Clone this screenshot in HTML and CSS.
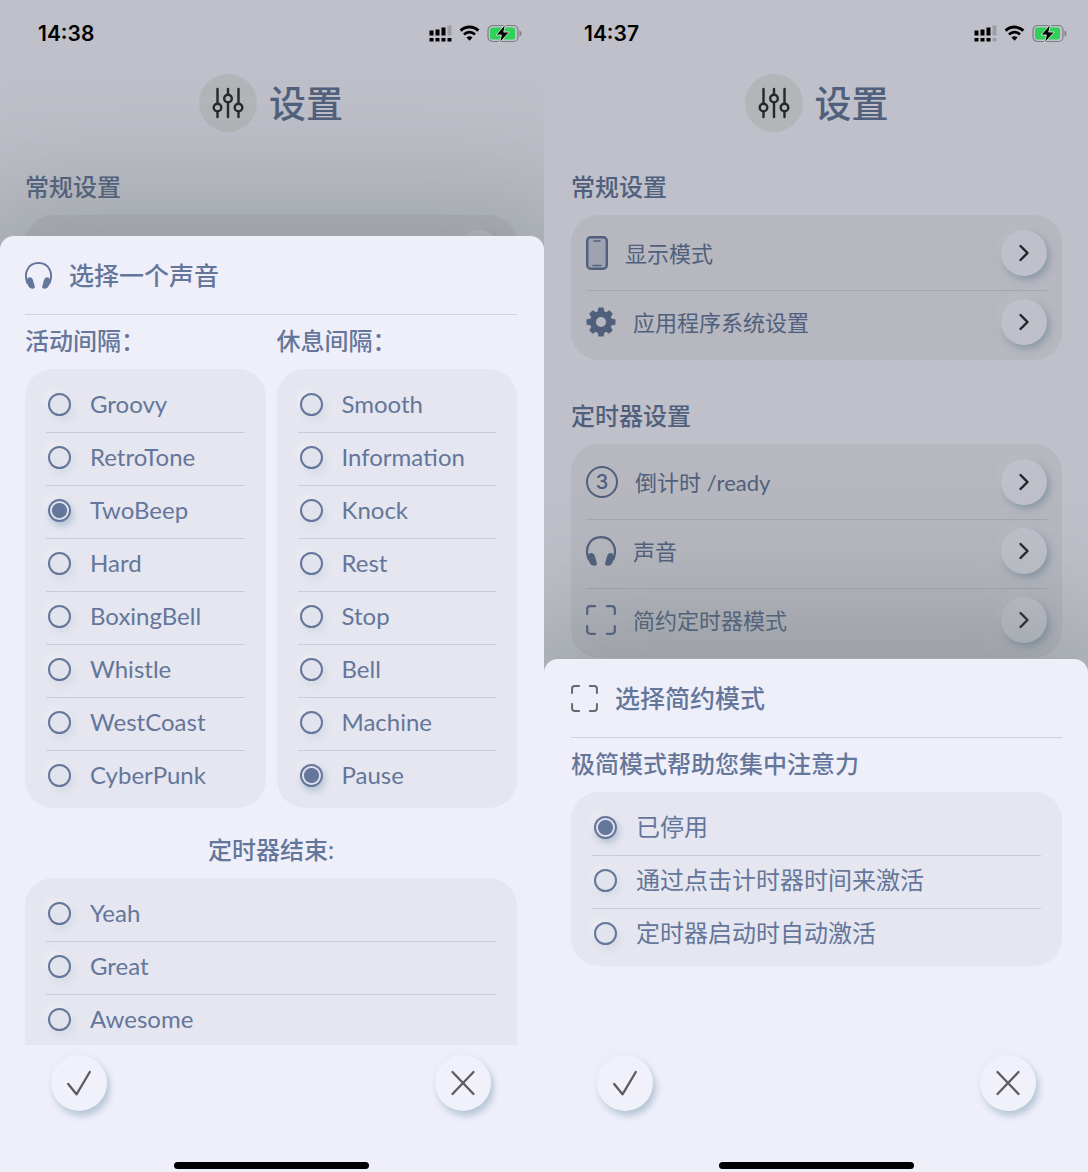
FILE: index.html
```html
<!DOCTYPE html>
<html lang="zh-CN">
<head>
<meta charset="utf-8">
<meta name="viewport" content="width=device-width, initial-scale=1">
<title>设置</title>
<link rel="stylesheet" href="styles.css">
</head>
<body>
<svg class="defs" aria-hidden="true">
  <symbol id="i-wifi" viewBox="0 0 21 17">
    <path d="M1.6 6.2a12.8 12.8 0 0 1 17.8 0" fill="none" stroke="#000" stroke-width="3"/>
    <path d="M5 9.9a8 8 0 0 1 11 0" fill="none" stroke="#000" stroke-width="2.8"/>
    <path d="M10.500 16.300l-3-3.200a4.400 4.400 0 0 1 6 0z" fill="#000"/>
  </symbol>
  <symbol id="i-battery" viewBox="0 0 35 19">
    <rect x="1" y="1.500" width="30" height="16" rx="4.500" fill="none" stroke="#7d7e84" stroke-width="1.200"/>
    <rect x="3" y="3.500" width="25" height="12" rx="2.500" fill="#2fd158"/>
    <path d="M32.500 6.500q2 .8 2 3t-2 3z" fill="#7d7e84"/>
    <path d="M18.500 0L9 11h5.400L12.400 19 22.400 8h-5.600z" fill="#000" stroke="#c6dccb" stroke-width="1"/>
  </symbol>
  <symbol id="i-sliders" viewBox="0 0 32 32">
    <g fill="none" stroke="#25272b" stroke-width="2.400" stroke-linecap="round">
      <path d="M5.500 2v14M5.500 25v5M16 2v4.500M16 15.500V30M26.500 2v14M26.500 25v5"/>
      <circle cx="5.500" cy="20.500" r="3.800"/><circle cx="16" cy="11.500" r="3.800"/><circle cx="26.500" cy="20.500" r="3.800"/>
    </g>
  </symbol>
  <symbol id="i-head" viewBox="0 0 30 30">
    <path d="M3 24C-2 13 3 1.200 15 1.200S32 13 27 24" fill="none" stroke="currentColor" stroke-width="2.200"/>
    <path d="M3.300 17.600q4.300-1.800 5.600 2.400l1.900 7q.6 2.500-2.200 2.800Q5 30 3.600 26.800L1.300 21.300z" fill="currentColor"/>
    <path d="M26.700 17.600q-4.300-1.800-5.600 2.400l-1.900 7q-.6 2.500 2.200 2.800 3.600.2 5-3l2.300-5.500z" fill="currentColor"/>
  </symbol>
  <symbol id="i-frame" viewBox="0 0 30 30">
    <path d="M1.200 9V4.200q0-3 3-3H9M21 1.200h4.800q3 0 3 3V9M28.800 21v4.800q0 3-3 3H21M9 28.800H4.200q-3 0-3-3V21" fill="none" stroke="currentColor" stroke-width="2.200" stroke-linecap="round"/>
  </symbol>
  <symbol id="i-phone" viewBox="0 0 22 34">
    <rect x="1.200" y="1.200" width="19.600" height="31.600" rx="3.500" fill="#9ea2b1" stroke="currentColor" stroke-width="2.400"/>
    <path d="M8 5h6M7 29.500h8" stroke="currentColor" stroke-width="1.600" stroke-linecap="round"/>
  </symbol>
  <symbol id="i-gear" viewBox="0 0 30 30">
    <g fill="currentColor">
      <path fill-rule="evenodd" d="M15 4a11 11 0 1 0 0 22 11 11 0 0 0 0-22zm0 6a5 5 0 1 1 0 10 5 5 0 0 1 0-10z"/>
      <path d="M12.500.5h5l1.300 5.500h-7.600zM12.500 29.500h5l1.300-5.500h-7.600zM.5 12.500v5L6 18.800v-7.600zM29.500 12.500v5L24 18.800v-7.600z"/>
      <path transform="rotate(45 15 15)" d="M12.500.8h5l1.300 5.500h-7.600zM12.500 29.200h5l1.300-5.500h-7.600zM.8 12.500v5l5.500 1.300v-7.600zM29.200 12.500v5l-5.500 1.300v-7.600z"/>
    </g>
  </symbol>
  <symbol id="i-chevron" viewBox="0 0 12 18">
    <path d="M2.500 2l7 7-7 7" fill="none" stroke="#222428" stroke-width="2.400" stroke-linecap="round" stroke-linejoin="round"/>
  </symbol>
  <symbol id="i-check" viewBox="0 0 26 26">
    <path d="M2.200 14l8.300 10.300L23.800 2" fill="none" stroke="#5c5c5e" stroke-width="2.300" stroke-linecap="round" stroke-linejoin="round"/>
  </symbol>
  <symbol id="i-close" viewBox="0 0 26 26">
    <path d="M2.500 2l21 22M23.500 2l-21 22" fill="none" stroke="#5c5c5e" stroke-width="2.300" stroke-linecap="round"/>
  </symbol>
</svg>

<main class="screens">
  <section class="phone phone-sound">
    <div class="page">
      <div class="status">
        <span class="time">14:38</span>
        <svg class="signal" viewBox="0 0 22 18" aria-hidden="true">
          <path d="M0 6.500h4v5H0zM6 5.500h4v6H6zM12 3.500h4v8h-4zM0 14h4v3.500H0zM6 14h4v3.500H6zM12 14h4v3.500h-4zM18 14h4v3.500h-4z"/>
          <path class="off" d="M18 1.500h4v10h-4z"/>
        </svg>
        <svg class="wifi" aria-hidden="true"><use href="#i-wifi"/></svg>
        <svg class="battery" aria-hidden="true"><use href="#i-battery"/></svg>
      </div>
      <header class="title">
        <span class="badge"><svg class="sliders" aria-hidden="true"><use href="#i-sliders"/></svg></span>
        <h1>设置</h1>
      </header>
      <h2 class="section">常规设置</h2>
      <div class="card settings">
        <div class="setting"><button class="round go" type="button" aria-label="打开"></button></div>
      </div>
    </div>

    <div class="sheet sheet-tall" role="dialog" aria-labelledby="t-sound">
      <header class="sheet-head">
        <svg class="icon-s" aria-hidden="true"><use href="#i-head"/></svg>
        <h2 id="t-sound">选择一个声音</h2>
      </header>
      <div class="sheet-body">
        <div class="columns">
          <div role="radiogroup" aria-labelledby="g-work">
            <h3 class="group" id="g-work">活动间隔：</h3>
            <div class="card options">
              <label class="option"><input type="radio" name="work">Groovy</label>
              <label class="option"><input type="radio" name="work">RetroTone</label>
              <label class="option"><input type="radio" name="work" checked>TwoBeep</label>
              <label class="option"><input type="radio" name="work">Hard</label>
              <label class="option"><input type="radio" name="work">BoxingBell</label>
              <label class="option"><input type="radio" name="work">Whistle</label>
              <label class="option"><input type="radio" name="work">WestCoast</label>
              <label class="option"><input type="radio" name="work">CyberPunk</label>
            </div>
          </div>
          <div role="radiogroup" aria-labelledby="g-rest">
            <h3 class="group" id="g-rest">休息间隔：</h3>
            <div class="card options">
              <label class="option"><input type="radio" name="rest">Smooth</label>
              <label class="option"><input type="radio" name="rest">Information</label>
              <label class="option"><input type="radio" name="rest">Knock</label>
              <label class="option"><input type="radio" name="rest">Rest</label>
              <label class="option"><input type="radio" name="rest">Stop</label>
              <label class="option"><input type="radio" name="rest">Bell</label>
              <label class="option"><input type="radio" name="rest">Machine</label>
              <label class="option"><input type="radio" name="rest" checked>Pause</label>
            </div>
          </div>
        </div>
        <div role="radiogroup" aria-labelledby="g-end">
          <h3 class="group group-center" id="g-end">定时器结束:</h3>
          <div class="card options options-more">
            <label class="option"><input type="radio" name="end">Yeah</label>
            <label class="option"><input type="radio" name="end">Great</label>
            <label class="option"><input type="radio" name="end">Awesome</label>
          </div>
        </div>
      </div>
      <footer class="actions">
        <button class="round act" type="button" aria-label="确定"><svg aria-hidden="true"><use href="#i-check"/></svg></button>
        <button class="round act" type="button" aria-label="取消"><svg aria-hidden="true"><use href="#i-close"/></svg></button>
      </footer>
      <div class="home"></div>
    </div>
  </section>

  <section class="phone phone-mode">
    <div class="page">
      <div class="status">
        <span class="time">14:37</span>
        <svg class="signal" viewBox="0 0 22 18" aria-hidden="true">
          <path d="M0 6.500h4v5H0zM6 5.500h4v6H6zM12 3.500h4v8h-4zM0 14h4v3.500H0zM6 14h4v3.500H6zM12 14h4v3.500h-4z"/>
          <path class="off" d="M18 1.500h4v10h-4zM18 14h4v3.500h-4z"/>
        </svg>
        <svg class="wifi" aria-hidden="true"><use href="#i-wifi"/></svg>
        <svg class="battery" aria-hidden="true"><use href="#i-battery"/></svg>
      </div>
      <header class="title">
        <span class="badge"><svg class="sliders" aria-hidden="true"><use href="#i-sliders"/></svg></span>
        <h1>设置</h1>
      </header>
      <h2 class="section">常规设置</h2>
      <div class="card settings">
        <div class="setting">
          <svg class="icon-phone" aria-hidden="true"><use href="#i-phone"/></svg><span>显示模式</span>
          <button class="round go" type="button" aria-label="显示模式"><svg aria-hidden="true"><use href="#i-chevron"/></svg></button>
        </div>
        <div class="setting">
          <svg class="icon" aria-hidden="true"><use href="#i-gear"/></svg><span>应用程序系统设置</span>
          <button class="round go" type="button" aria-label="应用程序系统设置"><svg aria-hidden="true"><use href="#i-chevron"/></svg></button>
        </div>
      </div>
      <h2 class="section section-next">定时器设置</h2>
      <div class="card settings">
        <div class="setting">
          <b class="count">3</b><span>倒计时 /ready</span>
          <button class="round go" type="button" aria-label="倒计时"><svg aria-hidden="true"><use href="#i-chevron"/></svg></button>
        </div>
        <div class="setting">
          <svg class="icon" aria-hidden="true"><use href="#i-head"/></svg><span>声音</span>
          <button class="round go" type="button" aria-label="声音"><svg aria-hidden="true"><use href="#i-chevron"/></svg></button>
        </div>
        <div class="setting">
          <svg class="icon" aria-hidden="true"><use href="#i-frame"/></svg><span>简约定时器模式</span>
          <button class="round go" type="button" aria-label="简约定时器模式"><svg aria-hidden="true"><use href="#i-chevron"/></svg></button>
        </div>
      </div>
    </div>

    <div class="sheet" role="dialog" aria-labelledby="t-mode">
      <header class="sheet-head">
        <svg class="icon-s icon-grey" aria-hidden="true"><use href="#i-frame"/></svg>
        <h2 id="t-mode">选择简约模式</h2>
      </header>
      <div class="sheet-body sheet-body-short">
        <div role="radiogroup" aria-labelledby="g-mode">
          <h3 class="group" id="g-mode">极简模式帮助您集中注意力</h3>
          <div class="card options">
            <label class="option"><input type="radio" name="mode" checked>已停用</label>
            <label class="option"><input type="radio" name="mode">通过点击计时器时间来激活</label>
            <label class="option"><input type="radio" name="mode">定时器启动时自动激活</label>
          </div>
        </div>
      </div>
      <footer class="actions">
        <button class="round act" type="button" aria-label="确定"><svg aria-hidden="true"><use href="#i-check"/></svg></button>
        <button class="round act" type="button" aria-label="取消"><svg aria-hidden="true"><use href="#i-close"/></svg></button>
      </footer>
      <div class="home"></div>
    </div>
  </section>
</main>
</body>
</html>
```

FILE: styles.css
```css
* { box-sizing: border-box; }

body {
  margin: 0;
  font-family: Lato, "Noto Sans CJK SC", sans-serif;
  color: #64769a;
}

h1, h2, h3 { margin: 0; font-weight: 500; }
svg { display: block; flex: none; }
.defs { position: absolute; width: 0; height: 0; }

.screens {
  display: grid;
  grid-template-columns: 1fr 1fr;
  min-height: 100vh;
}

/* The settings page and its sheet share one grid cell */
.phone {
  display: grid;
  min-width: 0;
  overflow: hidden;
  background: #bfc0c9;
}
.phone > * { grid-area: 1 / 1; min-width: 0; }
.phone-sound > * { padding: 0 27px 0 25px; }
.phone-mode > * { padding: 0 26px 0 27px; }

.page { color: #50607c; }

.status {
  display: flex;
  align-items: center;
  height: 66px;
  padding-left: 13px;
}
.time {
  margin-right: auto;
  padding-top: 2px;
  font: 600 21px/26px Inter, sans-serif;
  color: #000;
}
.status svg { margin-right: 7px; }
.signal { width: 23px; height: 18px; }
.signal .off { fill: #9d9ea5; }
.wifi { width: 21px; height: 18px; }
.status .battery { width: 35px; height: 19px; margin-right: -5px; }

.title {
  display: flex;
  align-items: center;
  justify-content: center;
  gap: 12px;
  margin: 8px 0 27px;
}
.badge {
  display: grid;
  place-items: center;
  width: 58px;
  height: 58px;
  border-radius: 50%;
  background: #b3b5b9;
}
.sliders { width: 32px; height: 32px; }
.title h1 { padding-top: 2px; font-size: 37px; line-height: 56px; }

.section { font-size: 24px; line-height: 56px; }
.section-next { margin-top: 28px; }

.card { border-radius: 28px; background: #e5e6ef; }
.settings { padding: 7px 15px 1px; background: #b6b7bf; }
.setting {
  display: flex;
  align-items: center;
  gap: 17px;
  padding: 8px 0 14px;
  font-size: 22px;
}
.setting + .setting { border-top: 1px solid #a5a7ad; }
.setting span { padding-bottom: 3px; }
.setting .round { margin-left: auto; }
.icon { width: 30px; height: 30px; }
.icon-phone { width: 22px; height: 34px; }
.count {
  width: 32px;
  height: 32px;
  border: 2px solid;
  border-radius: 50%;
  font: 500 20px/28px Inter, sans-serif;
  text-align: center;
}

.round {
  display: grid;
  place-items: center;
  flex: none;
  padding: 0;
  border: 0;
  border-radius: 50%;
}
.go {
  width: 46px;
  height: 46px;
  background: #bfc0c9;
  box-shadow: 3px 4px 7px #8c9aa7, -5px -5px 6px rgba(190, 191, 196, 0.5);
}
.go svg { width: 12px; height: 18px; }

.sheet {
  display: flex;
  flex-direction: column;
  align-self: end;
  border-radius: 14px 14px 0 0;
  background: #efeffa;
  box-shadow: 0 0 120px 40px rgba(100, 114, 112, 0.38);
}
.sheet-tall { height: calc(80vh - 2px); }

.sheet-head {
  display: flex;
  align-items: center;
  gap: 17px;
  height: 79px;
  flex: none;
  border-bottom: 1px solid #d0d1db;
}
.sheet-head h2 { font-size: 25px; line-height: 36px; }
.icon-s { width: 27px; height: 27px; }
.icon-grey { color: #66686c; }

.sheet-body { flex: 1; min-height: 0; overflow: hidden; }
.sheet-body-short { padding-bottom: 79px; }
.columns {
  display: grid;
  grid-template-columns: 1fr 1fr;
  gap: 11px;
  margin-bottom: 16px;
}
.group { height: 54px; font-size: 24px; line-height: 52px; }
.group-center { text-align: center; }

.options { padding: 11px 21px 5px; }
.options-more { padding-bottom: 28px; }
.option {
  display: flex;
  align-items: center;
  gap: 19px;
  padding: 0 0 4px 2px;
  font-size: 24px;
  line-height: 48px;
}
.option + .option { border-top: 1px solid #cbccd6; }

.option input {
  appearance: none;
  flex: none;
  width: 23px;
  height: 23px;
  margin: 0;
  border: 2px solid #64769a;
  border-radius: 50%;
  background: #e2e4ed;
  box-shadow: 3px 5px 7px #d7dce7, -5px -5px 5px rgba(236, 236, 244, 0.6);
}
.option input:checked {
  background: radial-gradient(circle, #64769a 7px, #dfe2ee 8px);
  box-shadow: 2px 4px 7px #b3c2d3, -5px -5px 5px rgba(236, 236, 244, 0.6);
}

.actions {
  display: flex;
  justify-content: space-between;
  padding: 10px 26px 0;
}
.act {
  width: 56px;
  height: 56px;
  background: #f1f1fc;
  box-shadow: 3px 5px 7px #b4c6d4, -5px -4px 8px #ebedf6;
}
.act svg { width: 26px; height: 26px; }

.home {
  align-self: center;
  width: 195px;
  height: 7px;
  margin: 51px 0 3px;
  border-radius: 4px;
  background: #000;
}
```
